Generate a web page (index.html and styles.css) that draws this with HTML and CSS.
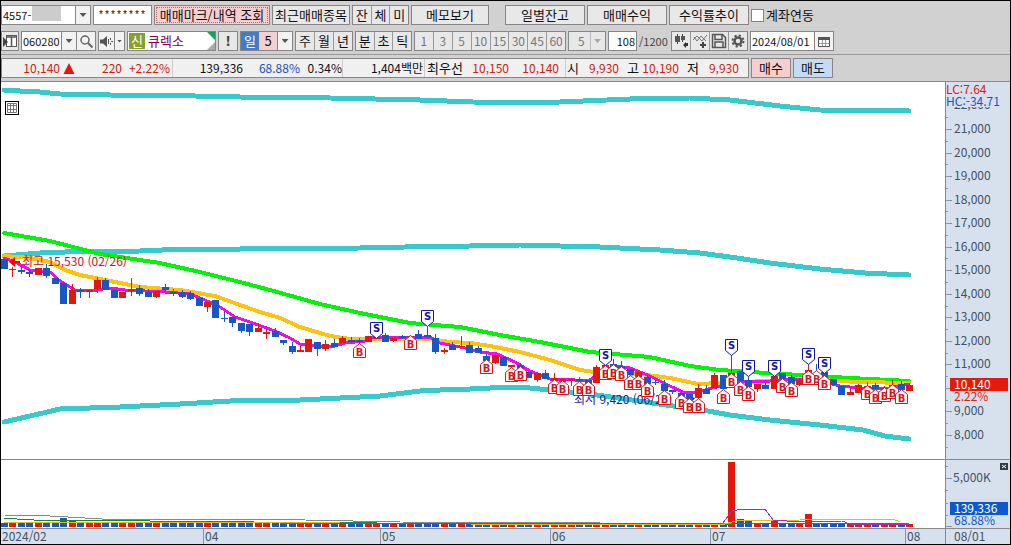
FILE: index.html
```html
<!DOCTYPE html>
<html lang="ko">
<head>
<meta charset="utf-8">
<title>큐렉소 일봉 차트</title>
<link rel="stylesheet" href="styles.css">
</head>
<body>
<main class="window">
  <header class="toolbar">
    <div class="row">
      <div class="box account">
        <input class="field" type="text" value="4557-" aria-label="계좌번호">
        <span class="mask"></span>
        <button class="drop" type="button" aria-label="계좌 선택"></button>
      </div>
      <input class="box password" type="text" value="********" aria-label="비밀번호">
      <button class="box btn pink dotted w116" type="button">매매마크/내역 조회</button>
      <button class="box btn w78" type="button">최근매매종목</button>
      <div class="box group w57">
        <button type="button">잔</button><button type="button">체</button><button type="button">미</button>
      </div>
      <button class="box btn w78" type="button">메모보기</button>
      <button class="box btn w80 apart" type="button">일별잔고</button>
      <button class="box btn w80" type="button">매매수익</button>
      <button class="box btn w80" type="button">수익률추이</button>
      <label class="link"><input type="checkbox">계좌연동</label>
    </div>

    <div class="row">
      <button class="box btn icon w18" type="button" aria-label="패널 열기">
        <svg width="16" height="16" viewBox="0 0 16 16"><rect x="4.500" y="2.500" width="10" height="11" fill="#fff" stroke="#555"/><path d="M4 4h11M9.500 4v9" stroke="#555" stroke-width="1.500"/><path d="M1 4l5 5-5 5z" fill="#444"/></svg>
      </button>
      <div class="box code">
        <input class="field" type="text" value="060280" aria-label="종목코드">
        <button class="drop" type="button" aria-label="종목 목록"></button>
        <button class="cell w19" type="button" aria-label="종목 검색">
          <svg width="15" height="15" viewBox="0 0 15 15" fill="none" stroke="#666"><circle cx="6" cy="6" r="4" stroke-width="1.500"/><path d="M9 9l4.500 4.500" stroke-width="2"/></svg>
        </button>
      </div>
      <div class="box sound">
        <button class="cell" type="button" aria-label="소리">
          <svg width="15" height="13" viewBox="0 0 15 13"><path d="M1 4.500h3L8 1v11L4 8.500H1z" fill="#555"/><path d="M9.500 4v5M11.500 3v2M11.500 8v2M12 6.500h2" stroke="#555" fill="none"/></svg>
        </button>
        <button class="drop small" type="button" aria-label="소리 설정"></button>
      </div>
      <div class="box stock"><b class="badge">신</b><span>큐렉소</span></div>
      <button class="box btn alert w20" type="button">!</button>
      <div class="box period">
        <button class="day" type="button">일</button><button class="pinkcell" type="button">5</button><button class="drop" type="button" aria-label="기간 선택"></button>
      </div>
      <div class="box group w58">
        <button type="button">주</button><button type="button">월</button><button type="button">년</button>
      </div>
      <div class="box group w57">
        <button type="button">분</button><button type="button">초</button><button type="button">틱</button>
      </div>
      <div class="box group minutes">
        <button type="button">1</button><button type="button">3</button><button type="button">5</button><button type="button">10</button><button type="button">15</button><button type="button">30</button><button type="button">45</button><button type="button">60</button>
      </div>
      <div class="box unit">
        <select aria-label="분 단위" disabled><option>5</option></select>
      </div>
      <input class="box count" type="text" value="108" aria-label="봉 개수">
      <span class="total">/1200</span>
      <div class="box group tools">
        <button type="button" aria-label="차트 종류">
          <svg width="17" height="16" viewBox="0 0 17 16"><path d="M4.500 1v10M9.500 1v8" stroke="#444"/><path d="M2 3h5v6H2zM8 3h4v4H8z" fill="#555"/><path d="M15 10v3h-2v2l-3-3 3-3v1z" fill="#333"/></svg>
        </button>
        <button type="button" aria-label="지표 추가">
          <svg width="17" height="16" viewBox="0 0 17 16" fill="none" stroke="#777"><path d="M1 7l4-4 5 5 5-6M2 4l3 4 4-5 5 5"/><path d="M11 9v6M8 12h6" stroke="#444" stroke-width="2"/></svg>
        </button>
        <button type="button" aria-label="저장">
          <svg width="16" height="16" viewBox="0 0 16 16" fill="none" stroke="#555" stroke-width="1.500"><path d="M1.500 1.500h10l3 3v10h-13zM4 2v4.500h7V2M4 14V9h8v5"/></svg>
        </button>
        <button type="button" aria-label="설정">
          <svg width="16" height="16" viewBox="0 0 16 16" fill="none" stroke="#555"><circle cx="8" cy="8" r="3.500" stroke-width="2.500"/><circle cx="8" cy="8" r="5.500" stroke-width="2" stroke-dasharray="2.200 2.120"/></svg>
        </button>
      </div>
      <div class="box date">
        <input class="field" type="text" value="2024/08/01" aria-label="기준일">
        <button class="cell w19" type="button" aria-label="달력">
          <svg width="12" height="11" viewBox="0 0 12 11"><path d="M.5 1.500h11v9H.5z" fill="#fff" stroke="#555"/><path d="M0 1h12v3H0z" fill="#555"/><path d="M4.500 4v6M7.500 4v6M1 7.500h10" stroke="#999"/></svg>
        </button>
      </div>
    </div>

    <div class="row quotes">
      <div class="box panel">
        <div class="part first"><span class="up">10,140</span><svg width="12" height="11" viewBox="0 0 12 11"><path d="M6 0l5.500 11H.5z" fill="#e0190c"/></svg><span class="up">220</span><span class="up">+2.22%</span></div>
        <div class="part second"><span>139,336</span><span class="down">68.88%</span><span>0.34%</span></div>
        <div class="part third"><span>1,404백만</span></div>
        <div class="part fourth"><span class="name">최우선</span><span class="up">10,150</span><span class="up">10,140</span></div>
        <div class="part fifth"><span class="name">시</span><span class="up">9,930</span><span class="name">고</span><span class="up">10,190</span><span class="name">저</span><span class="up">9,930</span></div>
      </div>
      <button class="box btn pink w40" type="button">매수</button>
      <button class="box btn blue w40" type="button">매도</button>
    </div>
  </header>

  <section class="chart" aria-label="가격 차트">
    <svg class="plot" id="price" viewBox="1 82 944 377">
      <g class="bands">
        <polyline points="4,90 20,91 40,92 60,94 110,95 195,96 240,97 330,98 420,100 500,103 560,102 630,99 690,98 730,100 780,106 820,110 909,111"/>
        <polyline points="4,256 40,253 65,252 140,251 185,249 240,249 360,248 405,247 470,246 520,245 600,247 660,250 700,253 730,257 770,263 820,269 865,273 909,275"/>
        <polyline points="4,422 30,416 60,409 120,407 180,404 230,401 255,400 300,400 340,398 380,396 420,391 440,390 470,389 490,388 510,387 530,388 560,391 590,394 625,399 680,407 708,411 730,415 770,420 820,425 863,430 885,436 909,439"/>
      </g>
      <polyline class="ma60" points="4,233 50,241 100,254 160,263 200,272 240,282 270,290 320,304 360,313 410,323 460,327 500,335 540,342 590,352 650,357 690,366 720,370 750,372 800,375 850,378 909,381"/>
      <polyline class="ma20" points="4,256 30,258 50,262 65,270 80,275 110,281 140,287 180,290 215,296 240,305 260,312 280,318 300,327 330,336 350,339 380,339 430,339 450,342 470,343 490,346 520,352 550,360 580,370 595,372 640,374 670,378 698,384 720,383 740,382 770,381 820,380 860,382 909,383"/>
      <polyline class="ma5" points="4,258 15,262 30,270 50,272 60,281 75,290 90,291 110,288 125,290 165,292 190,294 205,300 220,307 235,317 250,322 275,331 290,338 300,344 320,346 335,346 345,343 365,341 372,338 400,337 430,337 440,343 465,348 480,352 497,354 515,362 530,371 550,379 575,380 590,380 600,372 615,366 630,368 650,376 670,386 685,393 698,392 712,388 730,384 745,381 770,381 800,379 820,381 840,386 860,388 890,388 909,384"/>
      <text class="low" x="574" y="404">최저 9,420 (06/26)</text>
      <path class="lowarrow" d="M687 396l8 2-5 6z"/>
      <g id="candles"></g>
      <path class="higharrow" d="M9 262l6-5v4h5v2h-5v4z"/>
      <text class="high" x="22" y="266">최고 15,530 (02/26)</text>
      <g id="marks"></g>
      <g class="tablebtn"><rect x="5.500" y="101.500" width="13" height="13"/><path d="M7.500 103.500h9v9h-9zM10.500 103.500v9M13.500 103.500v9M8 105.500h9M8 109.500h9"/></g>
    </svg>
    <svg class="axis" id="priceaxis" viewBox="945 82 65 377">
      <g id="priceticks"></g>
      <rect class="cover" x="946" y="82" width="64" height="25"/>
      <text class="uptext" x="946" y="94">LC:7.64</text>
      <text class="downtext" x="946" y="106">HC:-34.71</text>
      <rect class="uptag" x="950" y="378" width="58" height="13"/>
      <text class="tagtext" x="954" y="389">10,140</text>
      <text class="uptext" x="954" y="401">2.22%</text>
    </svg>
    <svg class="plot top" viewBox="1 460 944 68">
      <g id="volume"></g>
      <g class="volumelines">
        <polyline class="v120" points="4,515 50,516 85,518 102,519 300,519 305,520 400,522 600,523 909,523"/>
        <polyline class="v60" points="4,518 17,519 34,520 150,521 254,522 500,524 728,525 735,523 909,523"/>
        <polyline class="v20" points="4,522 340,523 600,525 725,524 735,521 800,520 805,519 893,519 900,522"/>
        <polyline class="v5" points="280,523 600,524 617,523 635,523 645,524 723,523 732,511 737,510 752,509 765,509 773,520 800,522 842,521 850,524 909,524"/>
      </g>
    </svg>
    <svg class="axis top" viewBox="945 460 65 68">
      <path class="tick" d="M945 478.500h7M945 466.500h3M945 490.500h3M945 503.500h3M945 515.500h3M945 526.500h7"/>
      <text class="ticktext" x="953" y="482">5,000K</text>
      <rect class="downtag" x="950" y="502" width="58" height="13"/>
      <text class="tagtext" x="954" y="513">139,336</text>
      <text class="downtext" x="954" y="525">68.88%</text>
      <rect class="closebox" x="1000" y="463" width="8" height="7"/>
      <path class="closex" d="M1002 465l4 3M1006 465l-4 3"/>
    </svg>
    <svg class="dates top" viewBox="1 529 944 15">
      <path class="tick" d="M203.500 529v15M380.500 529v15M550.500 529v15M710.500 529v15M905.500 529v15"/>
      <text x="2" y="541">2024/02</text><text x="205" y="541">04</text><text x="382" y="541">05</text><text x="552" y="541">06</text><text x="712" y="541">07</text><text x="907" y="541">08</text>
    </svg>
    <svg class="axis dates top" viewBox="945 529 65 15"><text x="954" y="541">08/01</text></svg>
  </section>
</main>
<script src="chart.js"></script>
</body>
</html>
```
FILE: styles.css
```css
* { box-sizing: border-box; }
body {
  margin: 0;
  font-family: "Noto Sans CJK KR", sans-serif;
  font-size: 13px;
  line-height: 18px;
  color: #111;
}
button, input, select { font: inherit; color: inherit; margin: 0; padding: 0; border: 0; border-radius: 0; background: none; min-width: 0; }
svg { display: block; }

.window { display: flex; flex-direction: column; min-height: 100vh; border: 1px solid #000; background: #d1d1d1; }
.toolbar { border-bottom: 1px solid #888; padding-bottom: 3px; }
.row { display: flex; flex-wrap: wrap; gap: 2px; padding-top: 4px; }
.row + .row { padding-top: 6px; }
.row + .quotes { margin-top: 3px; padding-top: 3px; border-top: 1px solid #999; }

.box { display: flex; align-items: stretch; height: 20px; border: 1px solid #868686; background: #fff; white-space: nowrap; overflow: hidden; }
.btn { align-items: center; justify-content: center; background: #e8e8e8; text-align: center; }
.pink { background: #f5cfcf; }
.blue { background: #c4dbf3; }
.dotted { outline: 1px dotted #b66; outline-offset: -3px; }
.field { flex: 1; width: 0; padding-left: 1px; font-size: 11px; }
.w18 { width: 18px; }
.w19 { width: 19px; }
.w20 { width: 20px; }
.w40 { width: 40px; }
.w57 { width: 57px; }
.w58 { width: 58px; }
.w78 { width: 78px; }
.w80 { width: 80px; }
.w116 { width: 116px; }
.apart { margin-left: 14px; }

.drop { flex: none; display: flex; align-items: center; justify-content: center; width: 15px; border-left: 1px solid #868686; background: #f2f2f2; }
.drop::after { content: ""; width: 7px; height: 4px; background: #555; clip-path: polygon(0 0, 100% 0, 50% 100%); }
.small { width: 10px; }
.small::after { width: 5px; height: 3px; }
.cell { display: flex; align-items: center; justify-content: center; border-left: 1px solid #868686; background: #f2f2f2; }

.account { width: 90px; }
.account .field { flex: none; width: 30px; }
.mask { flex: 1; margin: 0 14px 3px 0; background: #ccc; }
.password { width: 59px; padding-left: 4px; font-family: "Liberation Mono", monospace; font-size: 10px; }
.link { display: flex; align-items: center; gap: 2px; }
.link input { appearance: none; width: 13px; height: 13px; border: 1px solid #868686; background: #fff; }

.icon { overflow: hidden; }
.code { width: 75px; }
.sound { width: 27px; }
.sound .cell { flex: 1; border-left: 0; }
.stock { position: relative; width: 89px; gap: 3px; padding: 1px; color: #800050; line-height: 16px; }
.badge { width: 16px; background: #8c9f2c; color: #fff; font-weight: 400; text-align: center; }
.stock::before, .stock::after { content: ""; position: absolute; right: 0; width: 8px; height: 8px; }
.stock::before { top: 0; background: #18a060; clip-path: polygon(0 0, 100% 0, 100% 100%); }
.stock::after { bottom: 0; background: #aaa; clip-path: polygon(100% 0, 100% 100%, 0 100%); }
.alert { font-weight: 900; color: #444; }
.period { width: 53px; }
.period button { flex: 1; }
.period .drop { flex: none; }
.period .day { background: #437bc4; color: #fff; }
.period .pinkcell { background: #f5cfcf; }
.group { background: #e8e8e8; }
.group button { flex: 1; display: flex; align-items: center; justify-content: center; overflow: hidden; }
.group button + button { border-left: 1px solid #999; }
.minutes { width: 152px; font-size: 12px; color: #777; }
.unit { position: relative; width: 38px; background: #e8e8e8; }
.unit select { appearance: none; flex: 1; padding-left: 9px; font-size: 12px; color: #777; opacity: 1; }
.unit::before { content: ""; position: absolute; right: 14px; top: 0; bottom: 0; border-left: 1px solid #bbb; }
.unit::after { content: ""; position: absolute; right: 4px; top: 7px; width: 7px; height: 4px; background: #aaa; clip-path: polygon(0 0, 100% 0, 50% 100%); }
.count { width: 29px; padding-right: 1px; font-size: 11px; text-align: right; }
.total { width: 30px; font-size: 11px; line-height: 20px; color: #444; }
.tools { width: 77px; }
.date { width: 84px; }

.panel { width: 748px; background: #f1f0f1; font-size: 12px; }
.name { font-size: 13px; }
.part { display: flex; align-items: center; text-align: right; border-right: 1px solid #ccc; }
.part:last-child { border-right: 0; }
.up { color: #d0200e; }
.down { color: #1a4fc0; }
.first { width: 171px; }
.first span:nth-child(1) { width: 58px; }
.first svg { margin: 0 1px 0 3px; }
.first span:nth-child(3) { width: 46px; }
.first span:nth-child(4) { width: 48px; }
.second { width: 170px; }
.second span:nth-child(1) { width: 70px; }
.second span:nth-child(2) { width: 57px; }
.second span:nth-child(3) { width: 42px; }
.third { width: 82px; }
.third span { width: 80px; }
.fourth { width: 141px; padding-left: 2px; }
.fourth span:nth-child(1) { width: 36px; text-align: left; }
.fourth span:nth-child(2) { width: 46px; }
.fourth span:nth-child(3) { width: 50px; }
.fifth { flex: 1; padding-left: 1px; }
.fifth .up { width: 40px; margin-right: 8px; }

.chart { flex: 1; display: grid; grid-template-columns: 944fr 65fr; align-content: start; background: #fff; font-size: 12px; }
.chart svg { width: 100%; height: auto; overflow: hidden; }
.chart .top { box-sizing: content-box; border-top: 1px solid #888; }
.axis, .dates { background: #d7e1ed; }
.axis { box-shadow: inset 1px 0 #888; }
.bands polyline { stroke: #38caca; stroke-width: 5; }
polyline { fill: none; stroke-linejoin: round; stroke-linecap: round; shape-rendering: crispEdges; }
.ma60 { stroke: #00f408; stroke-width: 4; }
.ma20 { stroke: #ffc20e; stroke-width: 4; }
.ma5 { stroke: #f408f0; stroke-width: 3; }
.high { fill: #c8102c; }
.low { fill: #1818a0; }
.higharrow { fill: #f00; }
.lowarrow { fill: #1818a0; }
.rise { fill: #e0190c; }
.fall { fill: #1656c8; }
.buy { fill: #fff; stroke: #d8141c; }
.sell { fill: #fff; stroke: #1414a8; }
.marktext { font: 700 10px "DejaVu Sans", sans-serif; text-anchor: middle; }
.buytext { fill: #d8141c; }
.selltext { fill: #1414a8; }
.tablebtn rect { fill: #fff; stroke: #000; }
.tablebtn path { fill: none; stroke: #777; }
.tick { stroke: #8995a3; fill: none; }
.ticktext, .dates text { fill: #435266; }
.cover { fill: #d7e1ed; }
.uptext { fill: #d8200e; }
.downtext { fill: #1656c8; }
.uptag { fill: #e61a0c; }
.downtag { fill: #0b58cf; }
.tagtext { fill: #fff; }
.closebox { fill: #333b45; }
.closex { stroke: #fff; }
.volumelines polyline { stroke-width: 1; }
.v120 { stroke: #888; }
.v60 { stroke: #158a48; }
.v20 { stroke: #e6b818; }
.v5 { stroke: #b42aa0; }
```
FILE: chart.js
```js
// One entry per trading day: colour, body top, body bottom, wick top, wick bottom.
const days = `b259,269,259,269 r269,270,267,277 b270,272,267,274 b272,274,270,277 r268,275,268,275 b268,276,264,278
b278,284,278,284 b283,304,283,304 r290,304,284,304 b290,292,288,298 r290,292,290,298 r280,289,277,293
b280,290,278,290 b290,298,290,298 r292,298,292,298 r289,291,278,296 b288,294,285,296 b292,297,289,297
r291,297,291,298 b287,290,284,292 b292,294,289,296 b292,297,290,298 b293,299,291,300 b298,306,298,306
r302,307,302,312 b300,318,300,318 b318,319,311,322 b317,323,317,327 b323,331,323,333 b324,332,324,336
r328,332,324,332 r332,334,329,339 b331,337,328,337 b340,343,340,345 b346,352,342,354 r350,352,346,352
r339,352,339,352 b342,349,342,356 r344,349,340,351 b343,347,339,347 r338,343,336,343 b340,342,337,343
b340,342,338,345 r336,342,336,342 r337,339,336,339 b335,342,333,342 r338,341,338,342 b336,338,335,339
r336,337,335,339 b334,339,330,339 b335,337,327,337 b338,352,334,354 r350,352,348,354 b345,350,342,350
r346,347,336,348 b345,353,342,353 b348,353,346,353 b356,361,354,361 r355,363,355,364 b357,366,357,366
r365,367,365,370 b365,372,363,372 b372,378,372,378 r373,380,373,382 b373,379,370,379 r378,381,373,381
r379,382,378,382 r379,381,378,386 b379,381,377,382 b380,384,380,384 r367,383,365,383 r365,368,364,368
b364,370,359,370 b366,372,361,372 b369,375,369,377 r372,377,370,377 b377,384,375,384 b382,383,380,385
b384,391,380,391 b390,392,390,394 b393,398,390,398 b394,402,394,402 r388,398,384,400 b389,394,385,394
r375,388,373,388 b375,389,375,389 r373,378,355,378 b371,381,371,381 b380,387,376,387 r384,389,384,392
b385,389,380,389 r376,389,376,389 b373,379,373,379 b377,384,375,384 r380,385,378,386 r370,375,364,375
b374,376,364,378 b372,378,372,378 b379,385,379,386 b386,395,386,395 r392,395,387,395 r385,393,384,393
r386,388,382,388 b385,389,383,389 r388,390,386,390 r385,389,380,389 b384,390,381,390 r385,391,383,391`
  .split(/\s+/).map(d => [d[0], ...d.slice(1).split(",").map(Number)]);

// Day number and the bottom edge of each buy mark; day number and the top edge of each sell mark.
const buys = [[42,358],[48,350],[57,374],[60,382],[61,381],[65,394],[66,395],[68,396],[69,396],[71,380],[72,379],[73,381],
  [74,390],[75,390],[76,397],[78,405],[80,409],[81,413],[82,413],[85,404],[86,388],[87,396],[88,401],[92,393],[93,397],
  [96,385],[95,385],[97,390],[102,400],[103,404],[104,402],[105,399],[106,404]];
const sells = [[44,322],[50,310],[71,349],[86,339],[88,360],[91,360],[95,348],[97,357]];
const volumes = { 7: 9, 8: 6, 19: 5, 23: 5, 86: 65, 87: 8, 88: 6, 91: 6, 95: 13 };

const xOf = day => Math.round(4 + day * 905 / 107);
const kind = { r: "rise", b: "fall" };
const rect = (cls, x, y, w, h) => `<rect class="${cls}" x="${x}" y="${y}" width="${w}" height="${h}"/>`;
const fill = (id, html) => { document.getElementById(id).innerHTML = html; };

fill("candles", days.map(([c, top, bottom, high, low], i) =>
  rect(kind[c], xOf(i), high, 1, low - high) + rect(kind[c], xOf(i) - 3, top, 7, bottom - top)).join(""));

fill("volume", days.map(([c], i) => {
  const h = volumes[i] || (i > 97 ? 3 : 4);
  return rect(kind[c], xOf(i) - 3, 527 - h, 7, h);
}).join(""));

fill("marks",
  buys.map(([day, y]) => {
    const x = xOf(day) + 0.5;
    return `<path class="buy" d="M${x} ${y - 14.5}l6 5v9h-12v-9z"/><text class="marktext buytext" x="${x}" y="${y - 2}">B</text>`;
  }).join("") +
  sells.map(([day, y]) => {
    const x = xOf(day) + 0.5;
    return `<path class="sell" d="M${x - 6} ${y + 0.5}h12v11l-6 5-6-5z"/><text class="marktext selltext" x="${x}" y="${y + 10}">S</text>`;
  }).join(""));

let ticks = "";
for (let price = 7500; price <= 22500; price += 500) {
  const y = Math.round(435 - (price - 8000) * 306 / 13000);
  const major = price % 1000 === 0;
  ticks += `<path class="tick" d="M945 ${y + 0.5}h${major ? 7 : 3}"/>`;
  if (major && price !== 10000) ticks += `<text class="ticktext" x="954" y="${y + 4}">${price.toLocaleString("en-US")}</text>`;
}
fill("priceticks", ticks);
```
